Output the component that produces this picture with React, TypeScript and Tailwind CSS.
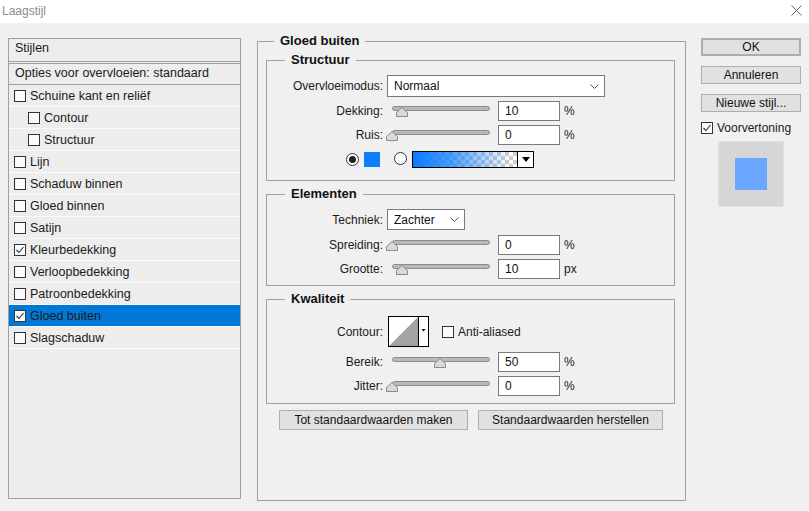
const STYLES = [
  { label: "Schuine kant en reliëf" },
  { label: "Contour", indent: true },
  { label: "Structuur", indent: true },
  { label: "Lijn" },
  { label: "Schaduw binnen" },
  { label: "Gloed binnen" },
  { label: "Satijn" },
  { label: "Kleurbedekking", checked: true },
  { label: "Verloopbedekking" },
  { label: "Patroonbedekking" },
  { label: "Gloed buiten", checked: true, selected: true },
  { label: "Slagschaduw" },
];

function Check({ checked = false }: { checked?: boolean }) {
  return (
    <span className="inline-flex h-[12px] w-[12px] shrink-0 items-center justify-center border border-[#333] bg-[#fbfbfb]">
      {checked && (
        <svg width="10" height="10" viewBox="0 0 10 10">
          <path d="M1.5 5 L4 7.5 L8.5 2" fill="none" stroke="#333" strokeWidth="1.1" />
        </svg>
      )}
    </span>
  );
}

function Radio({ on = false }: { on?: boolean }) {
  return (
    <span className="inline-flex h-[13px] w-[13px] shrink-0 items-center justify-center rounded-full border border-[#333] bg-white">
      {on && <span className="h-[7px] w-[7px] rounded-full bg-[#222]" />}
    </span>
  );
}

function Chevron() {
  return (
    <svg width="9" height="5" viewBox="0 0 9 5">
      <path d="M0.5 0.5 L4.5 4.5 L8.5 0.5" fill="none" stroke="#555" strokeWidth="1" />
    </svg>
  );
}

function Slider({ value }: { value: number }) {
  const left = 4 + value * 0.96 - 6;
  return (
    <div className="relative ml-[5px] h-[20px] w-[104px] shrink-0">
      <div className="ml-[4px] mt-[5px] h-[5px] w-[98px] rounded-full border border-[#8c8c8c] bg-[#b9b9b9]" />
      <svg
        className="absolute top-[6px]"
        style={{ left }}
        width="12"
        height="10"
        viewBox="0 0 12 10"
      >
        <path d="M6 0.5 L11.5 5.5 L11.5 9.5 L0.5 9.5 L0.5 5.5 Z" fill="#d9d9d9" stroke="#8a8a8a" />
      </svg>
    </div>
  );
}

function Field({ value }: { value: string }) {
  return (
    <div className="ml-[6px] flex h-[20px] w-[62px] shrink-0 items-center border border-[#7a7a7a] bg-white px-[6px] text-[#111]">
      {value}
    </div>
  );
}

function Label({ children }: { children: React.ReactNode }) {
  return <div className="w-[116px] shrink-0 text-right">{children}</div>;
}

function SliderRow({ label, value, unit, className = "" }: { label: string; value: number; unit: string; className?: string }) {
  return (
    <div className={"flex h-[20px] items-center " + className}>
      <Label>{label}</Label>
      <Slider value={value} />
      <Field value={String(value)} />
      <span className="ml-[4px]">{unit}</span>
    </div>
  );
}

function Group({ title, className = "", children }: { title: string; className?: string; children: React.ReactNode }) {
  return (
    <fieldset className={"mx-[8px] w-[409px] border border-[#a0a0a0] " + className}>
      <legend className="ml-[18px] px-[6px] text-[13px] font-bold leading-[14px] text-[#111]">{title}</legend>
      {children}
    </fieldset>
  );
}

function Button({ children, className = "" }: { children: React.ReactNode; className?: string }) {
  return (
    <div className={"flex items-center justify-center border border-[#adadad] bg-[#e1e1e1] text-[#111] " + className}>
      {children}
    </div>
  );
}

export default function App() {
  return (
    <div className="h-[511px] w-[809px] overflow-hidden bg-[#f0f0f0] font-['Liberation_Sans',Arial,sans-serif] text-[12px] leading-[14px] text-[#1a1a1a]">
      <div className="flex h-[23px] items-center justify-between bg-white pb-[2px] pl-[2px] pr-[7px]">
        <span className="text-[#8c8c8c]">Laagstijl</span>
        <svg width="11" height="11" viewBox="0 0 11 11">
          <path d="M0.5 0.5 L10.5 10.5 M10.5 0.5 L0.5 10.5" stroke="#666" strokeWidth="1" />
        </svg>
      </div>

      <div className="flex pl-[8px] pt-[15px]">
        {/* stijlen list */}
        <div className="h-[461px] w-[233px] shrink-0 border border-[#a0a0a0] bg-[#ededed] text-[12.5px]">
          <div className="flex h-[25px] items-center border-b-[3px] border-double border-[#a0a0a0] pb-[4px] pl-[6px]">Stijlen</div>
          <div className="flex h-[21px] items-center border-b border-[#a0a0a0] pb-[2px] pl-[6px]">
            Opties voor overvloeien: standaard
          </div>
          {STYLES.map((s) => (
            <div
              key={s.label}
              className={
                "flex h-[22px] items-center gap-[4px] border-b border-[#fafafa] " +
                (s.indent ? "pl-[19px] " : "pl-[5px] ") +
                (s.selected ? "bg-[#0078d7]" : "")
              }
            >
              <Check checked={s.checked} />
              <span>{s.label}</span>
            </div>
          ))}
        </div>

        {/* settings */}
        <fieldset className="ml-[16px] mt-[-4px] h-[467px] w-[429px] shrink-0 border border-[#a0a0a0]">
          <legend className="ml-[16px] px-[6px] text-[13px] font-bold leading-[14px] text-[#111]">Gloed buiten</legend>

          <Group title="Structuur" className="mt-[5px] pb-[12px]">
            <div className="mt-[8px] flex h-[22px] items-center">
              <Label>Overvloeimodus:</Label>
              <div className="ml-[4px] flex h-[22px] w-[218px] items-center justify-between border border-[#7a7a7a] bg-white pl-[6px] pr-[5px] text-[#111]">
                <span>Normaal</span>
                <Chevron />
              </div>
            </div>
            <SliderRow label="Dekking:" value={10} unit="%" className="mt-[4px]" />
            <SliderRow label="Ruis:" value={0} unit="%" className="mt-[4px]" />
            <div className="mt-[6px] flex h-[17px] items-center pl-[79px]">
              <Radio on />
              <span className="ml-[5px] h-[15px] w-[16px] bg-[#0d7dfd]" />
              <span className="ml-[14px]">
                <Radio />
              </span>
              <div className="ml-[5px] flex h-[17px] w-[122px] border border-black">
                <div className="flex-1 bg-[repeating-conic-gradient(#cfcfcf_0%_25%,#ffffff_0%_50%)] bg-[length:8px_8px]">
                  <div className="h-full w-full bg-[linear-gradient(to_right,#0a7cff,rgba(10,124,255,0.75)_35%,rgba(10,124,255,0)_95%)]" />
                </div>
                <div className="flex w-[16px] items-center justify-center border-l border-black bg-white">
                  <svg width="8" height="5" viewBox="0 0 8 5">
                    <path d="M0 0 L8 0 L4 5 Z" fill="#000" />
                  </svg>
                </div>
              </div>
            </div>
          </Group>

          <Group title="Elementen" className="mt-[6px] pb-[6px]">
            <div className="mt-[8px] flex h-[21px] items-center">
              <Label>Techniek:</Label>
              <div className="ml-[4px] flex h-[21px] w-[78px] items-center justify-between border border-[#7a7a7a] bg-white pl-[6px] pr-[5px] text-[#111]">
                <span>Zachter</span>
                <Chevron />
              </div>
            </div>
            <SliderRow label="Spreiding:" value={0} unit="%" className="mt-[5px]" />
            <SliderRow label="Grootte:" value={10} unit="px" className="mt-[4px]" />
          </Group>

          <Group title="Kwaliteit" className="mt-[6px] pb-[7px]">
            <div className="mt-[10px] flex h-[31px] items-center">
              <Label>Contour:</Label>
              <svg className="ml-[5px]" width="41" height="31" viewBox="0 0 41 31">
                <rect x="0.5" y="0.5" width="40" height="30" fill="#fff" stroke="#000" />
                <path d="M1 30 L30 1 L30 30 Z" fill="#a3a3a3" />
                <path d="M30.5 0.5 L30.5 30.5" stroke="#000" />
                <path d="M33.5 13 L37.5 13 L35.5 15.5 Z" fill="#000" />
              </svg>
              <span className="ml-[13px] flex items-center gap-[4px]">
                <Check />
                <span>Anti-aliased</span>
              </span>
            </div>
            <SliderRow label="Bereik:" value={50} unit="%" className="mt-[5px]" />
            <SliderRow label="Jitter:" value={0} unit="%" className="mt-[4px]" />
          </Group>

          <div className="ml-[21px] mt-[6px] flex gap-[10px]">
            <Button className="h-[20px] w-[189px]">Tot standaardwaarden maken</Button>
            <Button className="h-[20px] w-[185px]">Standaardwaarden herstellen</Button>
          </div>
        </fieldset>

        {/* right column */}
        <div className="ml-[15px] flex w-[100px] shrink-0 flex-col">
          <Button className="h-[18px] border-2 border-[#0078d7]">OK</Button>
          <Button className="mt-[10px] h-[18px]">Annuleren</Button>
          <Button className="mt-[10px] h-[18px]">Nieuwe stijl...</Button>
          <div className="mt-[9px] flex items-center gap-[4px]">
            <Check checked />
            <span>Voorvertoning</span>
          </div>
          <div className="ml-[17px] mt-[6px] flex h-[66px] w-[66px] items-center justify-center border border-[#e2e2e2] bg-[#d6d6d6]">
            <div className="h-[32px] w-[32px] bg-[#6aa8ff]" />
          </div>
        </div>
      </div>
    </div>
  );
}
